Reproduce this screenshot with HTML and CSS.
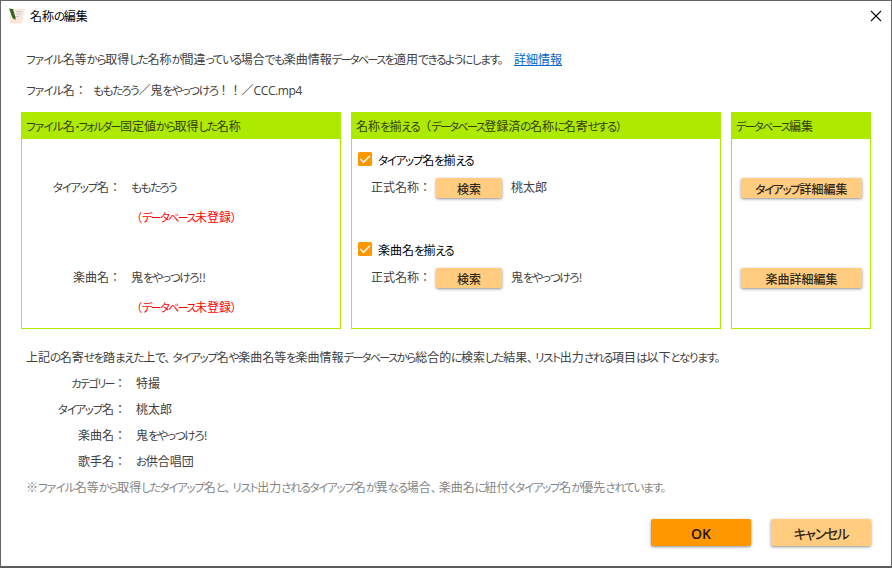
FILE: index.html
```html
<!DOCTYPE html>
<html lang="ja">
<head>
<meta charset="utf-8">
<title>名称の編集</title>
<link rel="stylesheet" href="styles.css">
</head>
<body>
<div class="window">
  <header class="titlebar">
    <svg class="app-icon" width="16" height="16" viewBox="0 0 16 16"><path d="M2 1H16L12.500 15.500H1Z" fill="#fde6d8"/><path d="M7 3.500h6M7 6h5M6 8.500h4" stroke="#c3cbe4"/><path d="M0 .5 4 1 6.500 9.500V12L3.500 10Z" fill="#35651c"/></svg>
    <h1>名称<span class="k">の</span>編集</h1>
    <svg class="close" width="12" height="12" viewBox="0 0 12 12"><path d="M1 1 11 11M11 1 1 11" stroke="#111" stroke-width="1.200"/></svg>
  </header>
  <main>
    <p class="intro"><span class="lead"><span class="k file-word">ファイル</span>名等<span class="k">から</span>取得<span class="k">した</span>名称<span class="k">が</span>間違<span class="k">っている</span>場合<span class="k">でも</span>楽曲情報<span class="k long">データベース</span><span class="k">を</span>適用<span class="k">できるようにします。</span></span><a class="link" href="#">詳細情報</a></p>
    <p class="file"><span class="file-label"><span class="k file-word">ファイル</span>名：</span><span><span class="k">ももたろう</span>／鬼<span class="k">をやっつけろ</span>！！／<span class="latin">CCC.mp4</span></span></p>
    <div class="panels">
      <section class="panel source">
        <h2><span class="k file-word">ファイル</span>名<span class="k long">・フォルダー</span>固定値<span class="k">から</span>取得<span class="k">した</span>名称</h2>
        <div class="group">
          <div class="pair"><span class="label"><span class="k">タイアップ</span>名：</span><span class="k">ももたろう</span></div>
          <div class="warn"><span class="k paren">（</span><span class="k long">データベース</span>未登録<span class="k paren">）</span></div>
        </div>
        <div class="group">
          <div class="pair"><span class="label">楽曲名：</span><span>鬼<span class="k">をやっつけろ<span class="mark">!!</span></span></span></div>
          <div class="warn"><span class="k paren">（</span><span class="k long">データベース</span>未登録<span class="k paren">）</span></div>
        </div>
      </section>
      <section class="panel align">
        <h2>名称<span class="k">を</span>揃<span class="k">える</span>（<span class="k long">データベース</span>登録済<span class="k">の</span>名称<span class="k">に</span>名寄<span class="k">せする<span class="mark">）</span></span></h2>
        <div class="group">
          <div class="check"><svg width="14" height="14" viewBox="0 0 14 14"><rect width="14" height="14" rx="1.500" fill="#ff9800"/><path d="M2.300 7 5.500 10.200 12 3.800" fill="none" stroke="#fff" stroke-width="1.400"/></svg><span><span class="k">タイアップ</span>名<span class="k">を</span>揃<span class="k">える</span></span></div>
          <div class="formal"><span class="name">正式名称：</span><button class="small">検索</button><span>桃太郎</span></div>
        </div>
        <div class="group">
          <div class="check"><svg width="14" height="14" viewBox="0 0 14 14"><rect width="14" height="14" rx="1.500" fill="#ff9800"/><path d="M2.300 7 5.500 10.200 12 3.800" fill="none" stroke="#fff" stroke-width="1.400"/></svg><span>楽曲名<span class="k">を</span>揃<span class="k">える</span></span></div>
          <div class="formal"><span class="name">正式名称：</span><button class="small">検索</button><span>鬼<span class="k">をやっつけろ<span class="mark">!</span></span></span></div>
        </div>
      </section>
      <section class="panel edit">
        <h2><span class="k long">データベース</span>編集</h2>
        <div class="group"><button class="small"><span class="k">タイアップ</span>詳細編集</button></div>
        <div class="group"><button class="small">楽曲詳細編集</button></div>
      </section>
    </div>
    <p class="row">上記<span class="k">の</span>名寄<span class="k">せを</span>踏<span class="k">まえた</span>上<span class="k">で<span class="comma">、</span>タイアップ</span>名<span class="k">や</span>楽曲名等<span class="k">を</span>楽曲情報<span class="k long">データベース</span><span class="k">から</span>総合的<span class="k">に</span>検索<span class="k">した</span>結果<span class="k"><span class="comma">、</span>リスト</span>出力<span class="k">される</span>項目<span class="k">は</span>以下<span class="k">となります。</span></p>
    <div class="row result"><span class="label"><span class="k long">カテゴリー</span>：</span><span>特撮</span></div>
    <div class="row result"><span class="label"><span class="k">タイアップ</span>名：</span><span>桃太郎</span></div>
    <div class="row result"><span class="label">楽曲名：</span><span>鬼<span class="k">をやっつけろ<span class="mark">!</span></span></span></div>
    <div class="row result"><span class="label">歌手名：</span><span><span class="k">お</span>供合唱団</span></div>
    <p class="row note">※<span class="k file-word">ファイル</span>名等<span class="k">から</span>取得<span class="k">したタイアップ</span>名<span class="k">と<span class="comma">、</span>リスト</span>出力<span class="k">されるタイアップ</span>名<span class="k">が</span>異<span class="k">なる</span>場合<span class="k"><span class="comma">、</span></span>楽曲名<span class="k">に</span>紐付<span class="k">くタイアップ</span>名<span class="k">が</span>優先<span class="k">されています。</span></p>
    <footer><button class="ok">OK</button><button class="cancel"><span class="k">キャンセル</span></button></footer>
  </main>
</div>
</body>
</html>
```
FILE: styles.css
```css
* { box-sizing: border-box; }
body {
  margin: 0;
  font: 12px/20px "Noto Sans CJK JP", sans-serif;
  color: #404040;
  white-space: nowrap;
}
h1, h2, p { margin: 0; font: inherit; }
/* Kana are set tighter than kanji, as in a UI font */
.k { font-size: .96em; font-feature-settings: "palt"; letter-spacing: -1.280px; }
.file-word { letter-spacing: -.8px; }
.long { letter-spacing: -1.500px; font-size: .915em; }
.comma { letter-spacing: 2.100px; }
.paren { letter-spacing: .3px; }
.mark { letter-spacing: -.3px; margin-left: .6px; }
.window {
  width: 892px;
  height: 568px;
  background: #fff;
  border: 1px solid #666;
  border-bottom: 2px solid #5c5c5c;
}
.titlebar {
  display: flex;
  align-items: center;
  height: 30px;
  padding: 0 9px 0 8px;
  color: #000;
}
.titlebar h1 { margin: 0 0 1px 5px; }
.close { margin-left: auto; }
main { padding: 18px 20px 0; }
.intro, .file { display: flex; height: 20px; padding-left: 5px; }
.file { margin-top: 11px; }
.lead { width: 488px; }
.link { color: #0066cc; text-decoration: underline; }
.file-label { width: 67px; }
.latin { font-family: "Open Sans", sans-serif; letter-spacing: -.4px; }
.panels {
  display: grid;
  grid-template-columns: 320px 370px 140px;
  gap: 10px;
  margin-top: 12px;
}
.panel { height: 217px; border: 1px solid #aeea00; }
.panel h2 {
  height: 26px;
  margin-bottom: 9px;
  padding: 3px 4px 0;
  background: #aeea00;
  color: #33401a;
}
.group { height: 90px; }
.source .group { padding-top: 29px; }
.pair { display: flex; }
.pair .label { width: 99px; text-align: right; margin-right: 10px; }
.warn { margin-top: 10px; padding-left: 114px; color: #f00; }
.check { display: flex; align-items: center; gap: 6px; padding-left: 6px; color: #000; height: 24px; }
.check svg { margin-bottom: 2px; }
.formal { display: flex; align-items: center; padding: 6px 0 0 19px; }
.formal > span { margin-top: -2px; }
.formal .name { width: 65px; }
.formal .small { width: 66px; margin-right: 9px; }
button {
  display: block;
  border: 0;
  border-radius: 2px;
  padding: 0;
  background: #ffcc80;
  color: #33291a;
  font: 500 12px/20px "Noto Sans CJK JP", sans-serif;
  box-shadow: 0 1px 3px rgba(0, 0, 0, .45);
}
.small { height: 20px; padding-top: 1px; line-height: 19px; }
.edit .group { padding: 30px 0 0 9px; }
.edit .small { width: 121px; }
.row { height: 26px; line-height: 26px; padding-left: 5px; }
.panels + .row { margin-top: 15px; }
.result { display: flex; }
.result .label { width: 100px; text-align: right; margin-right: 10px; }
.note { color: #858585; }
footer { display: flex; justify-content: flex-end; gap: 20px; margin-top: 19px; }
footer button { width: 100px; height: 27px; font-size: 14px; line-height: 29px; }
.ok { background: #ff9800; color: #1f1200; font-family: "Open Sans", sans-serif; font-weight: 600; }
```
